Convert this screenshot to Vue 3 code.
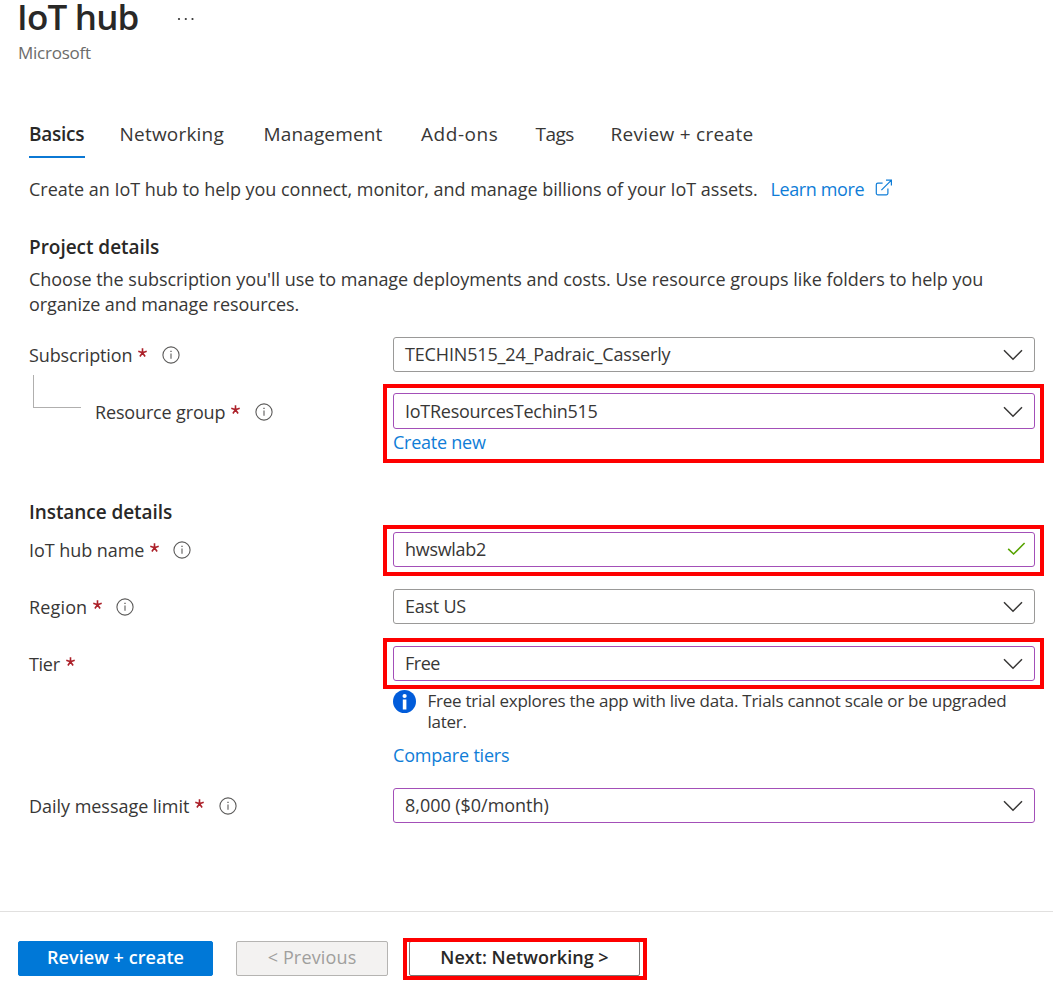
<script setup>
const tabs = [
  { label: 'Basics', cls: 't-basics' },
  { label: 'Networking', cls: 't-net' },
  { label: 'Management', cls: 't-mgmt' },
  { label: 'Add-ons', cls: 't-add' },
  { label: 'Tags', cls: 't-tags' },
  { label: 'Review + create', cls: 't-review' },
]
const projectFields = [
  { id: 'subscription', label: 'Subscription', value: 'TECHIN515_24_Padraic_Casserly', info: true },
  { id: 'group', label: 'Resource group', value: 'IoTResourcesTechin515', info: true, edited: true, marked: true, nested: true, link: 'Create new' },
]
const instanceFields = [
  { id: 'name', label: 'IoT hub name', value: 'hwswlab2', info: true, edited: true, marked: true, valid: true },
  { id: 'region', label: 'Region', value: 'East US', info: true },
  { id: 'tier', label: 'Tier', value: 'Free', edited: true, marked: true, note: true, link: 'Compare tiers' },
  { id: 'limit', label: 'Daily message limit', value: '8,000 ($0/month)', info: true, edited: true },
]
const sections = [
  { id: 'project', title: 'Project details', fields: projectFields },
  { id: 'instance', title: 'Instance details', fields: instanceFields },
]
</script>

<template>
  <main class="page">
    <header class="head">
      <div class="title-row">
        <h1>IoT hub</h1>
        <svg class="dots" width="18" height="4" viewBox="0 0 18 4"><circle cx="2" cy="2" r="1.1" /><circle cx="8.8" cy="2" r="1.1" /><circle cx="15.5" cy="2" r="1.1" /></svg>
      </div>
      <p class="publisher">Microsoft</p>
    </header>

    <nav class="tabs">
      <a v-for="(tab, i) in tabs" :key="tab.label" class="tab" :class="[tab.cls, { active: i === 0 }]">{{ tab.label }}</a>
    </nav>

    <p class="intro">
      <span>Create an IoT hub to help you connect, monitor, and manage billions of your IoT assets.</span>
      <a class="learn">Learn more</a>
      <svg class="ext" width="18" height="18" viewBox="0 0 18 18"><path d="M7.6 4.2H2.9a1.6 1.6 0 0 0-1.6 1.6v8.4a1.6 1.6 0 0 0 1.6 1.6h8.4a1.6 1.6 0 0 0 1.6-1.6V9.6M6.4 11.2 16.2 1.4M11 1.2h5.4v5.4" /></svg>
    </p>

    <section v-for="s in sections" :key="s.id" :class="s.id">
      <h2>{{ s.title }}</h2>
      <p v-if="s.id === 'project'" class="desc">
        Choose the subscription you'll use to manage deployments and costs. Use resource groups like folders to help you<br />
        <span>organize and manage resources.</span>
      </p>
      <div v-for="f in s.fields" :key="f.id" class="field" :class="['f-' + f.id, { nested: f.nested }]">
        <div class="label">
          <i v-if="f.nested" class="branch"></i>
          <span class="label-text">{{ f.label }}</span>
          <svg class="star" width="9" height="9" viewBox="0 0 9 9"><path d="M4.5 4.7V.2M4.5 4.7.3 3.3M4.5 4.7l4.2-1.4M4.5 4.7 1.9 8.5M4.5 4.7 7.1 8.5" /></svg>
          <svg v-if="f.info" class="info" width="18" height="18" viewBox="0 0 18 18"><circle cx="9" cy="9" r="8.1" /><path d="M9 7.5v5.2" /><path class="dot" d="M9 4.7v1.4" /></svg>
        </div>
        <div class="control">
          <div class="box" :class="{ edited: f.edited }">
            <span class="value">{{ f.value }}</span>
            <svg v-if="f.valid" class="check" width="19" height="14" viewBox="0 0 19 14"><path d="M1.2 6.8 6.6 12 17.6 1" /></svg>
            <svg v-else class="chev" width="20" height="12" viewBox="0 0 20 12"><path d="M1 1.2l9 9 9-9" /></svg>
          </div>
          <div v-if="f.note" class="note">
            <svg width="23" height="23" viewBox="0 0 23 23"><circle cx="11.5" cy="11.5" r="11.5" fill="#015cda" /><circle cx="11.6" cy="6" r="2.1" fill="#fff" /><path d="M9.8 9.5h3.6v10H9.8z" fill="#fff" /></svg>
            <p>Free trial explores the app with live data. Trials cannot scale or be upgraded<br />later.</p>
          </div>
          <a v-if="f.link" class="link">{{ f.link }}</a>
          <div v-if="f.marked" class="mark"></div>
        </div>
      </div>
    </section>

    <footer class="foot">
      <button class="primary">Review + create</button>
      <button class="prev" disabled>&lt; Previous</button>
      <div class="next-wrap">
        <button class="next">Next: Networking &gt;</button>
        <div class="mark"></div>
      </div>
    </footer>
  </main>
</template>

<style>
body { background: #fff; }
</style>

<style scoped>
.page {
  width: 1053px;
  height: 985px;
  box-sizing: border-box;
  display: flex;
  flex-direction: column;
  font-family: 'Open Sans', 'Noto Sans', sans-serif;
  font-size: 18px;
  color: #383736;
  white-space: nowrap;
}
h1, h2, p { margin: 0; }
svg { display: block; flex: none; fill: none; }
a { color: #0f7dd7; }
.head { height: 114px; padding-left: 18px; }
.title-row { display: flex; height: 34px; align-items: center; }
h1 { width: 160px; font-size: 35px; font-weight: 600; line-height: 34px; letter-spacing: -0.8px; color: #292827; margin-left: -1px; }
.dots { fill: #333; margin-top: 4px; }
.publisher { font-size: 17px; line-height: 24px; margin-top: 7px; letter-spacing: -0.24px; color: #6c6b6a; }
.tabs { display: flex; height: 44px; padding-left: 29px; }
.tab { box-sizing: border-box; height: 44px; line-height: 40px; font-size: 19px; color: #383736; }
.tab.active { width: 56px; font-weight: 600; color: #292827; border-bottom: 2px solid #0b78d4; }
.t-basics { letter-spacing: -0.25px; margin-right: 34.5px; }
.t-net { width: 144px; letter-spacing: 0.21px; }
.t-mgmt { width: 157.5px; letter-spacing: 0.14px; }
.t-add { width: 114.5px; letter-spacing: 0.55px; }
.t-tags { width: 75px; letter-spacing: -0.5px; }
.t-review { letter-spacing: 0.31px; }
.intro { display: flex; align-items: center; height: 24px; margin-top: 19px; padding-left: 29px; line-height: 24px; letter-spacing: -0.027px; }
.intro span { width: 741.5px; }
.learn { letter-spacing: -0.38px; width: 104.5px; }
.ext { stroke: #0f7dd7; stroke-width: 1.2; margin-top: -2px; }
section { padding-left: 29px; }
h2 { font-size: 19px; line-height: 24px; font-weight: 600; letter-spacing: -0.03px; color: #292827; }
.project { height: 292px; padding-top: 34px; box-sizing: border-box; }
.desc { line-height: 25px; margin-top: 8px; height: 50px; letter-spacing: -0.027px; }
.desc span { letter-spacing: -0.1px; }
.instance { padding-top: 7px; }
.instance h2 { letter-spacing: -0.07px; }
.field { display: flex; height: 57px; }
.label { position: relative; display: flex; align-items: center; width: 364px; height: 36px; flex: none; }
.control { position: relative; width: 642px; }
.box { box-sizing: border-box; height: 35px; border: 1px solid #9a9998; border-radius: 3px; display: flex; align-items: center; justify-content: space-between; padding: 0 11px; line-height: 33px; }
.box.edited { border-color: #a34fb8; }
.chev { stroke: #383736; stroke-width: 1.5; }
.check { stroke: #57a300; stroke-width: 1.6; margin-right: -3px; margin-top: -2px; }
.star { stroke: #ac2029; stroke-width: 1.6; margin: -6px 0 0 6px; }
.info { stroke: #5c5b5a; stroke-width: 1.1; margin-left: 15px; }
.info .dot { stroke-width: 1.3; }
.link { display: block; line-height: 26px; letter-spacing: -0.24px; }
.mark { position: absolute; inset: -7px -9px auto -10px; height: 51px; box-sizing: border-box; border: 4px solid #fe0000; }
.f-subscription { margin-top: 20px; height: 56px; }
.f-subscription .label-text { letter-spacing: -0.12px; }
.f-subscription .value { letter-spacing: -0.16px; }
.f-group { height: 58px; }
.f-group .box { height: 36px; padding-top: 1px; }
.f-group .label { box-sizing: border-box; padding-left: 66px; margin-top: 1px; }
.f-group .label-text { letter-spacing: -0.15px; }
.f-group .value { letter-spacing: -0.27px; }
.f-group .mark { top: -9px; height: 79px; }
.branch { position: absolute; left: 4px; top: -19px; width: 48px; height: 33px; box-sizing: border-box; border-left: 1px solid #b0afae; border-bottom: 1px solid #b0afae; }
.f-name { margin-top: 8px; }
.f-name .label-text { letter-spacing: -0.06px; }
.f-name .info { margin-left: 14px; }
.f-name .value { letter-spacing: -0.3px; }
.f-region .label-text { letter-spacing: 0.15px; }
.f-region .info { margin-left: 14px; }
.f-region .value { letter-spacing: -0.25px; }
.f-tier { height: 142px; }
.f-tier .label-text { letter-spacing: -0.3px; }
.f-tier .value { letter-spacing: -0.5px; }
.f-tier .mark { top: -8px; }
.f-tier .link { letter-spacing: -0.2px; margin-top: 10px; }
.note { display: flex; margin-top: 9px; }
.note p { margin-left: 11.5px; font-size: 17px; line-height: 21px; letter-spacing: -0.25px; }
.f-limit .label-text, .f-limit .value { letter-spacing: -0.035px; }
.foot { box-sizing: border-box; margin-top: auto; height: 74px; border-top: 1px solid #e1e0df; padding: 29px 0 0 18px; display: flex; }
button { box-sizing: border-box; height: 35px; padding: 0 0 3px; border-radius: 2px; font: 600 18px/30px 'Open Sans', 'Noto Sans', sans-serif; }
.primary { width: 195px; border: 1px solid #0078d7; background: #0078d7; color: #fff; letter-spacing: 0.05px; }
.prev { width: 152px; margin-left: 23px; border: 1px solid #b5b4b2; background: #f3f2f1; color: #a09f9d; font-weight: 400; letter-spacing: 0.15px; }
.next-wrap { position: relative; margin-left: 21px; width: 231px; }
.next { width: 231px; border: 1px solid #777675; background: #fff; color: #292827; letter-spacing: 0.03px; }
.next-wrap .mark { inset: -3px -7px auto -6px; height: 42px; }
</style>
